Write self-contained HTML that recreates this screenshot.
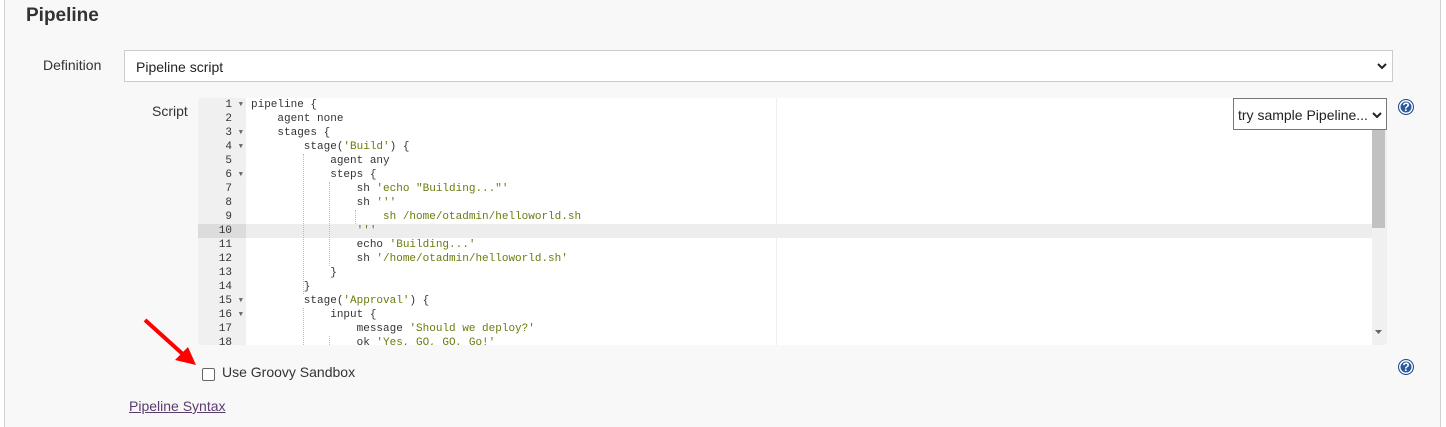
<!DOCTYPE html>
<html style="height:427px;overflow:hidden"><head><meta charset="utf-8"><style>
*{box-sizing:border-box;margin:0;padding:0}
body{width:1446px;height:427px;background:#fff;font-family:"Liberation Sans",sans-serif;position:relative;overflow:hidden}
.panel{position:absolute;left:4px;top:-2px;width:1437px;height:431px;background:#f8f8f8;border:1px solid #d0d0d0;border-bottom:none}
.abs{position:absolute}
h2{position:absolute;left:26px;top:5px;font-size:19px;font-weight:bold;color:#333}
.lbl{font-size:14px;color:#333}
.sel{background:#fff;border:1px solid #ccc;font-size:14px;color:#222}
.ed{position:absolute;left:198px;top:98px;width:1189px;height:247px;background:#fff;border-radius:3px;overflow:hidden}
.gut{position:absolute;left:0;top:0;width:48px;height:247px;background:#f0f0f0}
.code{font-family:"Liberation Mono",monospace;font-size:11px;line-height:14px;color:#333;white-space:pre}
.s{color:#6e7a0e}
.hl{position:absolute;left:0;top:126px;width:1174px;height:14px;background:#ededed}
.hlg{position:absolute;left:0;top:126px;width:48px;height:14px;background:#dcdcdc}
.guide{position:absolute;border-left:1px dotted #bbb;width:0}
.help{position:absolute;width:16px;height:16px;border-radius:50%;background:#2a5a9c;border:1px solid #1f4a88;color:#fff;font-size:12px;font-weight:bold;text-align:center;line-height:15px;box-shadow:inset 0 0 0 1.5px #fff}
.ln div{height:14px;text-align:right;padding-right:14px;position:relative}
.ln i{position:absolute;right:3px;top:0;font-style:normal;font-size:7px;color:#666}
</style></head><body>
<div class="panel"></div>
<h2>Pipeline</h2>
<div class="abs lbl" style="left:43px;top:57px">Definition</div>
<div class="abs sel" style="left:124px;top:50px;width:1269px;height:32px;padding:8px 11px">Pipeline script
<svg class="abs" style="right:5px;top:11px" width="10" height="8" viewBox="0 0 10 8"><path d="M1 2l4 4 4-4" stroke="#222" stroke-width="2" fill="none"/></svg></div>
<div class="abs lbl" style="left:152px;top:103px">Script</div>
<div class="ed">
<div class="gut"></div>
<div class="hl"></div><div class="hlg"></div>
<div class="abs" style="left:578px;top:0;width:1px;height:247px;background:#eee"></div>
<div class="guide" style="left:105px;top:56px;height:140px"></div>
<div class="guide" style="left:131px;top:84px;height:84px"></div>
<div class="guide" style="left:157px;top:112px;height:14px"></div>
<div class="guide" style="left:105px;top:210px;height:37px"></div>
<div class="guide" style="left:131px;top:238px;height:9px"></div>
<div class="code abs ln" style="left:0;top:0;width:48px"><div>1<i>▼</i></div><div>2</div><div>3<i>▼</i></div><div>4<i>▼</i></div><div>5</div><div>6<i>▼</i></div><div>7</div><div>8</div><div>9</div><div>10</div><div>11</div><div>12</div><div>13</div><div>14</div><div>15<i>▼</i></div><div>16<i>▼</i></div><div>17</div><div>18</div></div>
<div class="code abs" style="left:53px;top:0">pipeline {
    agent none
    stages {
        stage(<span class="s">'Build'</span>) {
            agent any
            steps {
                sh <span class="s">'echo "Building..."'</span>
                sh <span class="s">'''</span>
<span class="s">                    sh /home/otadmin/helloworld.sh</span>
<span class="s">                '''</span>
                echo <span class="s">'Building...'</span>
                sh <span class="s">'/home/otadmin/helloworld.sh'</span>
            }
        }
        stage(<span class="s">'Approval'</span>) {
            input {
                message <span class="s">'Should we deploy?'</span>
                ok <span class="s">'Yes, GO, GO, Go!'</span></div>
<div class="abs" style="left:1174px;top:0;width:15px;height:247px;background:#f0f0f0"></div>
<div class="abs" style="left:1174px;top:32px;width:13px;height:98px;background:#c1c1c1"></div>
<svg class="abs" style="left:1177px;top:232px" width="8" height="5"><path d="M0 0h7l-3.5 4z" fill="#666"/></svg>
</div>
<div class="abs sel" style="left:1233px;top:98px;width:154px;height:32px;border-color:#777;padding:8px 4px;white-space:nowrap">try sample Pipeline...
<svg class="abs" style="right:4px;top:12px" width="10" height="8" viewBox="0 0 10 8"><path d="M1 2l4 4 4-4" stroke="#222" stroke-width="2" fill="none"/></svg></div>
<div class="help" style="left:1398px;top:99px">?</div>
<div class="help" style="left:1398px;top:359px">?</div>
<svg class="abs" style="left:140px;top:315px" width="62" height="52"><path d="M5 5 L46 42" stroke="#f00" stroke-width="4"/><path d="M56 50 L35 45 L48 32 Z" fill="#f00"/></svg>
<div class="abs" style="left:202px;top:368px;width:13px;height:13px;border:1px solid #666;border-radius:2px;background:#fff"></div>
<div class="abs lbl" style="left:222px;top:364px">Use Groovy Sandbox</div>
<div class="abs" style="left:129px;top:398px;font-size:14px;color:#5a3d6e;text-decoration:underline">Pipeline Syntax</div>
</body></html>
